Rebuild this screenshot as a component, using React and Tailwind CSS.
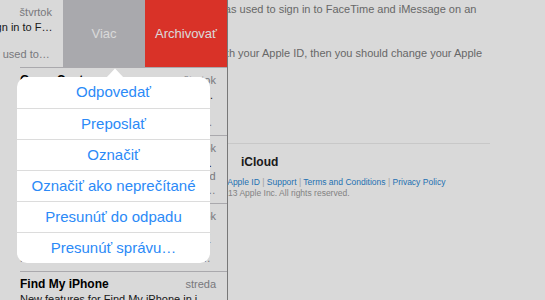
import React from 'react';

const mails = [
  {
    sender: 'Game Center',
    date: 'štvrtok',
    subject: 'Your Game Center account was used to sign in to a new device',
    preview:
      'Your Apple ID was used to sign in to Game Center on an iPhone 5s. If you have not recently used this device, change your password.',
  },
  {
    sender: 'Apple',
    date: 'štvrtok',
    subject: 'Your Apple ID was used to sign in to iCloud on a new device',
    preview:
      'Dear Customer, your Apple ID was used to sign in to iCloud via a web browser. If you have not signed in recently, you should change your password.',
  },
  {
    sender: 'iTunes Store',
    date: 'štvrtok',
    subject: 'Your receipt No. 1234567890 from the iTunes Store',
    preview:
      'Billed To: customer@icloud.com. Order Number and Document Number can be found in your purchase history.',
  },
];

function MailRow({ sender, date, subject, preview, clipped = false }) {
  return (
    <div className="h-[67px] w-[227px] shrink-0 pl-[20px] pr-[11px] pt-[5px]">
      <div className="flex h-[15px] items-center justify-between leading-[15px]">
        <span className="truncate text-[12px] font-bold text-black">{sender}</span>
        <span className="ml-2 shrink-0 text-[11px] text-[#8e8e93]">{date}</span>
      </div>
      <div className={`${clipped ? 'whitespace-nowrap' : 'truncate'} text-[11px] leading-[14px] text-[#222]`}>{subject}</div>
      <div className="line-clamp-2 text-[11px] leading-[13.5px] text-[#8e8e93]">{preview}</div>
    </div>
  );
}

function Separator() {
  return <div className="ml-[20px] h-px shrink-0 bg-[#c8c7cc]" />;
}

const menu = [
  'Odpovedať',
  'Preposlať',
  'Označiť',
  'Označiť ako neprečítané',
  'Presunúť do odpadu',
  'Presunúť správu…',
];

export default function App() {
  return (
    <div className="relative h-[300px] w-[545px] overflow-hidden bg-white font-['Liberation_Sans',Arial,sans-serif]">
      {/* message body */}
      <div className="pl-[147px] pt-[2px] text-[11px] leading-[14.67px] text-[#7a7a7a]">
        <p className="whitespace-nowrap">
          Your Apple ID was used to sign in to FaceTime and iMessage on an
          <br />
          iPhone 5s.
        </p>
        <p className="mt-[14.67px] whitespace-nowrap">
          If you sign on with your Apple ID, then you should change your Apple
          <br />
          ID password.
        </p>
        <p className="mt-[14.67px]">Apple Support</p>
        <div className="mt-[38px] h-px w-[343px] bg-[#ebebeb]" />
      </div>

      <div className="pl-[210px]">
        <div className="mt-[11px] pl-[31px] text-[12px] font-bold leading-[15px] text-[#222]">iCloud</div>
        <div className="mt-[7.5px] whitespace-nowrap pl-[4px] text-[8.5px] leading-[11px] text-[#2a86d2]">
          My Apple ID <span className="text-[#bbb]">|</span> Support <span className="text-[#bbb]">|</span> Terms and Conditions{' '}
          <span className="text-[#bbb]">|</span> Privacy Policy
        </div>
        <div className="whitespace-nowrap text-[8.5px] leading-[11px] text-[#9a9a9a]">
          © 2013 Apple Inc. All rights reserved.
        </div>
      </div>

      {/* mailbox list, laid over the message */}
      <div className="absolute left-0 top-0 bottom-0 flex w-[228px] flex-col border-r border-[#8e8e8e] bg-white">
        <div className="flex h-[67px] shrink-0 overflow-hidden">
          <div className="w-[63px] shrink-0 overflow-hidden">
            <div className="-ml-[164px]">
              <MailRow
                clipped
                sender="Apple"
                date="štvrtok"
                subject="Your Apple ID was used to sign in to F…"
                preview={
                  <>
                    <span className="block whitespace-nowrap">Dear Apple Customer,</span>
                    <span className="block whitespace-nowrap">Hi your Apple ID was recently used to…</span>
                  </>
                }
              />
            </div>
          </div>
          <div className="flex w-[82px] shrink-0 items-center justify-center bg-[#c7c7cc] text-[13px] text-white">Viac</div>
          <div className="flex flex-1 items-center justify-center bg-[#ff3b30] text-[13px] text-white">Archivovať</div>
        </div>
        <Separator />

        {mails.map((m) => (
          <React.Fragment key={m.subject}>
            <MailRow sender={m.sender} date={m.date} subject={m.subject} preview={m.preview} />
            <Separator />
          </React.Fragment>
        ))}

        <MailRow
          sender="Find My iPhone"
          date="streda"
          subject="New features for Find My iPhone in iOS 7"
          preview="Activation Lock and new features are now available."
        />
      </div>

      {/* dimming layer */}
      <div className="absolute inset-0 bg-black/15" />

      {/* action popover */}
      <svg className="absolute left-[106px] top-[68px]" width="18" height="10" viewBox="0 0 18 10">
        <polygon points="0,10 9,0.5 18,10" fill="#ffffff" />
      </svg>
      <div className="absolute left-[17px] top-[77px] w-[193px] overflow-hidden rounded-[10px] bg-white">
        {menu.map((item, i) => (
          <div
            key={item}
            className={`flex h-[31px] items-center justify-center text-[15px] text-[#2b8af7] ${
              i > 0 ? 'border-t border-[#dcdcdc]' : ''
            }`}
          >
            {item}
          </div>
        ))}
      </div>
    </div>
  );
}
